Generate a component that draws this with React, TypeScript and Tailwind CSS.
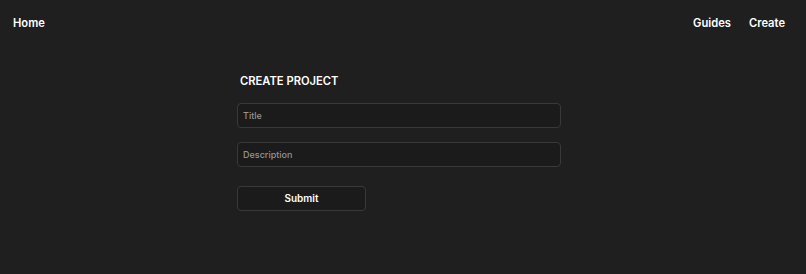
import React, { useState } from 'react';

export default function App() {
  const [title, setTitle] = useState('');
  const [description, setDescription] = useState('');

  return (
    <div className="min-h-screen bg-[#1f1f1f] text-white font-['Inter',sans-serif]">
      <nav className="flex items-center justify-between pl-[13px] pr-[21px] h-[47px]">
        <a href="#" className="text-[11.2px] font-semibold">Home</a>
        <div className="flex items-center gap-[18px]">
          <a href="#" className="text-[11.2px] font-semibold">Guides</a>
          <a href="#" className="text-[11.2px] font-semibold">Create</a>
        </div>
      </nav>

      <main className="flex justify-center pr-[8px] pt-[26px]">
        <form className="w-[324px] flex flex-col" onSubmit={(e) => e.preventDefault()}>
          <h1 className="text-[11.2px] font-semibold pl-[3px] mb-[13px]">CREATE PROJECT</h1>
          <input
            value={title}
            onChange={(e) => setTitle(e.target.value)}
            placeholder="Title"
            className="h-[25px] rounded-[4px] border border-[#393939] bg-[#1b1b1b] px-[5px] text-[9px] font-medium text-white placeholder:text-[#949494] outline-none"
          />
          <input
            value={description}
            onChange={(e) => setDescription(e.target.value)}
            placeholder="Description"
            className="mt-[14px] h-[25px] rounded-[4px] border border-[#393939] bg-[#1b1b1b] px-[5px] text-[9px] font-medium text-white placeholder:text-[#949494] outline-none"
          />
          <button
            type="submit"
            className="mt-[19px] w-[129px] h-[25px] rounded-[4px] border border-[#393939] bg-[#1b1b1b] text-[10px] font-semibold"
          >
            Submit
          </button>
        </form>
      </main>
    </div>
  );
}
